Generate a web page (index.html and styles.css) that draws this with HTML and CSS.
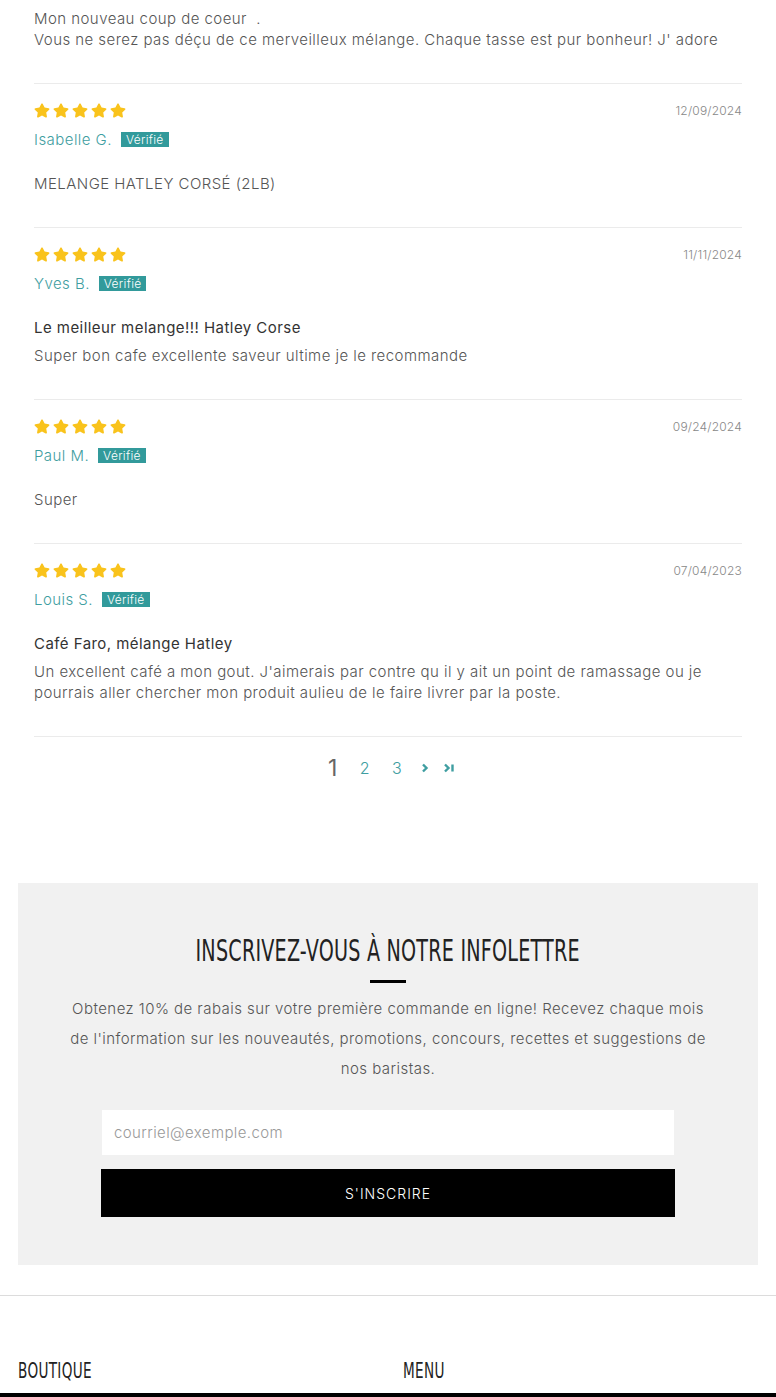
FILE: index.html
```html
<!DOCTYPE html>
<html lang="fr">
<head>
<meta charset="utf-8">
<title>Avis</title>
<link rel="stylesheet" href="styles.css">
</head>
<body>
<svg class="sprite" aria-hidden="true">
  <symbol id="star" viewBox="0 0 576 512"><path d="M259.3 17.8L194 150.2 47.9 171.5c-26.2 3.8-36.7 36.1-17.7 54.6l105.7 103-25 145.5c-4.5 26.3 23.2 46 46.4 33.7L288 439.6l130.7 68.7c23.2 12.2 50.9-7.4 46.4-33.7l-25-145.5 105.7-103c19-18.5 8.5-50.8-17.7-54.6L382 150.2 316.7 17.8c-11.7-23.6-45.6-23.9-57.4 0z"/></symbol>
</svg>
<main class="page">
  <section class="reviews">
    <article class="review review-cut">
      <p class="body">Mon nouveau coup de coeur&nbsp; .<br>Vous ne serez pas déçu de ce merveilleux mélange. Chaque tasse est pur bonheur! J' adore</p>
    </article>

    <article class="review">
      <div class="head">
        <div class="stars"><svg><use href="#star"/></svg><svg><use href="#star"/></svg><svg><use href="#star"/></svg><svg><use href="#star"/></svg><svg><use href="#star"/></svg></div>
        <span class="date">12/09/2024</span>
      </div>
      <div class="author"><span class="name">Isabelle G.</span><span class="badge">Vérifié</span></div>
      <div class="content"><p class="body">MELANGE HATLEY CORSÉ (2LB)</p></div>
    </article>

    <article class="review">
      <div class="head">
        <div class="stars"><svg><use href="#star"/></svg><svg><use href="#star"/></svg><svg><use href="#star"/></svg><svg><use href="#star"/></svg><svg><use href="#star"/></svg></div>
        <span class="date">11/11/2024</span>
      </div>
      <div class="author"><span class="name">Yves B.</span><span class="badge">Vérifié</span></div>
      <div class="content">
        <h3 class="title">Le meilleur melange!!! Hatley Corse</h3>
        <p class="body">Super bon cafe excellente saveur ultime je le recommande</p>
      </div>
    </article>

    <article class="review">
      <div class="head">
        <div class="stars"><svg><use href="#star"/></svg><svg><use href="#star"/></svg><svg><use href="#star"/></svg><svg><use href="#star"/></svg><svg><use href="#star"/></svg></div>
        <span class="date">09/24/2024</span>
      </div>
      <div class="author"><span class="name">Paul M.</span><span class="badge">Vérifié</span></div>
      <div class="content"><p class="body">Super</p></div>
    </article>

    <article class="review">
      <div class="head">
        <div class="stars"><svg><use href="#star"/></svg><svg><use href="#star"/></svg><svg><use href="#star"/></svg><svg><use href="#star"/></svg><svg><use href="#star"/></svg></div>
        <span class="date">07/04/2023</span>
      </div>
      <div class="author"><span class="name">Louis S.</span><span class="badge">Vérifié</span></div>
      <div class="content">
        <h3 class="title">Café Faro, mélange Hatley</h3>
        <p class="body">Un excellent café a mon gout. J'aimerais par contre qu il y ait un point de ramassage ou je pourrais aller chercher mon produit aulieu de le faire livrer par la poste.</p>
      </div>
    </article>

    <nav class="pagination">
      <span class="current">1</span>
      <a href="#">2</a>
      <a href="#">3</a>
      <a href="#" class="icon"><svg viewBox="0 0 12 12"><path d="M4 2.5l3.5 3.5L4 9.5"/></svg></a>
      <a href="#" class="icon"><svg viewBox="0 0 14 12"><path d="M3 2.5l3.5 3.5L3 9.5M10.5 2.5v7"/></svg></a>
    </nav>
  </section>

  <section class="newsletter">
    <h2 class="nl-title">Inscrivez-vous à notre infolettre</h2>
    <span class="nl-bar"></span>
    <p class="nl-text">Obtenez 10% de rabais sur votre première commande en ligne! Recevez chaque mois de l'information sur les nouveautés, promotions, concours, recettes et suggestions de nos baristas.</p>
    <form class="nl-form">
      <input type="email" placeholder="courriel@exemple.com">
      <button type="button">S'inscrire</button>
    </form>
  </section>
</main>

<footer class="footer">
  <div class="footer-cols">
    <h4>Boutique</h4>
    <h4>Menu</h4>
  </div>
  <div class="footer-bottom"></div>
</footer>
</body>
</html>
```
FILE: styles.css
```css
* { box-sizing: border-box; }
html, body { margin: 0; padding: 0; background: #fff; }
body {
  font-family: Inter, "Open Sans", sans-serif;
  font-weight: 300;
  color: #555;
  font-size: 15px;
  letter-spacing: 0.45px;
  overflow: hidden;
}
.sprite { display: none; }

.page { padding: 0 18px; }

.reviews { padding: 8px 16px 0; }

.review {
  padding: 18px 0 33px;
  border-bottom: 1px solid #ebebeb;
}
.review-cut { padding-top: 0; }

.head {
  display: flex;
  justify-content: space-between;
  align-items: center;
  height: 16px;
}
.stars { display: flex; gap: 3px; }
.stars svg { width: 16px; height: 15px; fill: #f9c31c; }
.date { font-size: 12px; color: #888; letter-spacing: 0.2px; }

.author {
  margin-top: 10px;
  height: 22px;
  display: flex;
  align-items: center;
  gap: 9px;
}
.name { color: #3f9ea1; font-size: 15px; }
.badge {
  background: #329a9b;
  color: #fff;
  font-size: 12px;
  line-height: 15px;
  padding: 0 5px;
  letter-spacing: 0.3px;
}

.content { margin-top: 23px; }

.body, .title {
  margin: 0;
  font-size: 15px;
  line-height: 21px;
}
.title { font-weight: 400; color: #333; margin-bottom: 7px; }
.body { color: #555; }

.pagination {
  display: flex;
  justify-content: center;
  align-items: center;
  margin-top: 20px;
  height: 22px;
  padding-left: 2px;
}
.pagination a, .pagination span {
  color: #3f9ea1;
  text-decoration: none;
  font-size: 16px;
  width: 32px;
  text-align: center;
}
.pagination .current { color: #666; font-size: 23px; font-weight: 400; }
.pagination .icon { width: 24px; display: flex; justify-content: center; }
.pagination svg { width: 12px; height: 12px; fill: none; stroke: #3f9ea1; stroke-width: 2.4; }
.pagination .icon:last-child svg { width: 14px; }

.newsletter {
  margin-top: 104px;
  background: #f1f1f1;
  padding: 50px 20px 48px;
  display: flex;
  flex-direction: column;
  align-items: center;
}
.nl-title {
  margin: 0;
  font-family: "DejaVu Sans Condensed", "Liberation Sans", sans-serif;
  font-weight: 400;
  font-size: 30px;
  line-height: 36px;
  text-transform: uppercase;
  color: #222;
  letter-spacing: 0.3px;
  white-space: nowrap;
  transform: scaleX(0.71);
}
.nl-bar {
  display: block;
  width: 36px;
  height: 3px;
  background: #000;
  margin-top: 11px;
}
.nl-text {
  margin: 11px 0 0;
  max-width: 645px;
  text-align: center;
  font-size: 15px;
  line-height: 30px;
  color: #555;
}
.nl-form {
  margin-top: 26px;
  width: 574px;
  display: flex;
  flex-direction: column;
  gap: 14px;
}
.nl-form input {
  height: 45px;
  margin: 0 1px;
  border: 0;
  background: #fff;
  padding: 0 12px;
  font-family: inherit;
  font-weight: 300;
  font-size: 15px;
  letter-spacing: 0.4px;
  color: #555;
  outline: none;
}
.nl-form input::placeholder { color: #999; }
.nl-form button {
  height: 48px;
  border: 0;
  background: #000;
  color: #fff;
  font-family: inherit;
  font-weight: 300;
  font-size: 14px;
  letter-spacing: 1px;
  text-transform: uppercase;
}

.footer {
  margin-top: 30px;
  border-top: 1px solid #dcdcdc;
}
.footer-cols {
  padding: 63px 18px 0;
  display: grid;
  grid-template-columns: 1fr 1fr;
  gap: 30px;
}
.footer-cols h4 {
  margin: 0;
  font-family: "DejaVu Sans Condensed", "Liberation Sans", sans-serif;
  font-weight: 400;
  font-size: 21px;
  line-height: 24px;
  text-transform: uppercase;
  color: #222;
  transform: scaleX(0.72);
  transform-origin: left center;
}
.footer-bottom {
  margin-top: 10px;
  height: 40px;
  background: #000;
}
```
